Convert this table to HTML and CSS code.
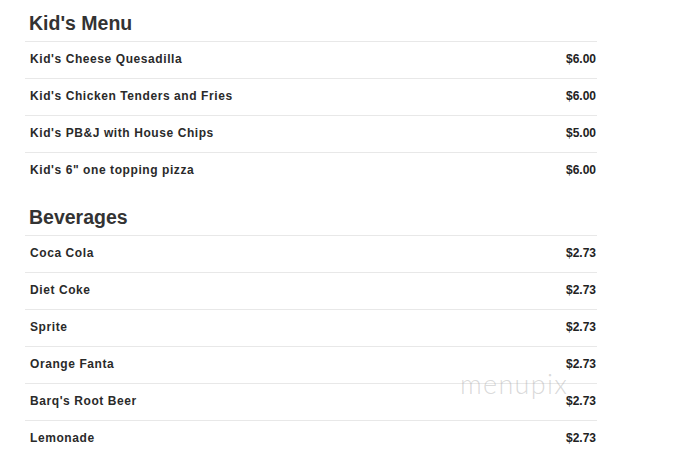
FILE: index.html
```html
<!DOCTYPE html>
<html>
<head>
<meta charset="utf-8">
<link rel="stylesheet" href="styles.css">
</head>
<body>
<div class="menu">
  <section class="section first">
    <h2 class="heading">Kid's Menu</h2>
    <div class="row"><span class="name">Kid's Cheese Quesadilla</span><span class="price">$6.00</span></div>
    <div class="row"><span class="name">Kid's Chicken Tenders and Fries</span><span class="price">$6.00</span></div>
    <div class="row"><span class="name">Kid's PB&amp;J with House Chips</span><span class="price">$5.00</span></div>
    <div class="row"><span class="name">Kid's 6" one topping pizza</span><span class="price">$6.00</span></div>
  </section>
  <section class="section">
    <h2 class="heading">Beverages</h2>
    <div class="row"><span class="name">Coca Cola</span><span class="price">$2.73</span></div>
    <div class="row"><span class="name">Diet Coke</span><span class="price">$2.73</span></div>
    <div class="row"><span class="name">Sprite</span><span class="price">$2.73</span></div>
    <div class="row"><span class="name">Orange Fanta</span><span class="price">$2.73</span></div>
    <div class="row"><span class="name">Barq's Root Beer</span><span class="price">$2.73</span></div>
    <div class="row"><span class="name">Lemonade</span><span class="price">$2.73</span></div>
  </section>
</div>
<div class="watermark">menupix</div>
</body>
</html>
```
FILE: styles.css
```css
html, body {
  margin: 0;
  padding: 0;
  background: #fff;
}
body {
  font-family: "Liberation Sans", Arial, sans-serif;
  color: #333;
  width: 695px;
  height: 470px;
  overflow: hidden;
  position: relative;
}
.menu {
  margin-left: 25px;
  width: 572px;
}
.section {
  margin-top: 17px;
}
.section.first {
  margin-top: 12px;
}
.heading {
  margin: 0;
  padding: 0 0 7px 4px;
  font-size: 19.5px;
  line-height: 22px;
  font-weight: bold;
  color: #333;
}
.row {
  display: flex;
  justify-content: space-between;
  border-top: 1px solid #e8e8e8;
  padding: 9px 1px 11px 5px;
  line-height: 16px;
  font-size: 12px;
  font-weight: bold;
  color: #2a2a2a;
}
.name {
  letter-spacing: 0.58px;
}
.price {
  color: #222;
}
.watermark {
  position: absolute;
  left: 460px;
  top: 367px;
  font-family: Lato, sans-serif;
  font-weight: 300;
  font-size: 27px;
  letter-spacing: 1.3px;
  color: rgba(160,160,160,0.4);
}
```
